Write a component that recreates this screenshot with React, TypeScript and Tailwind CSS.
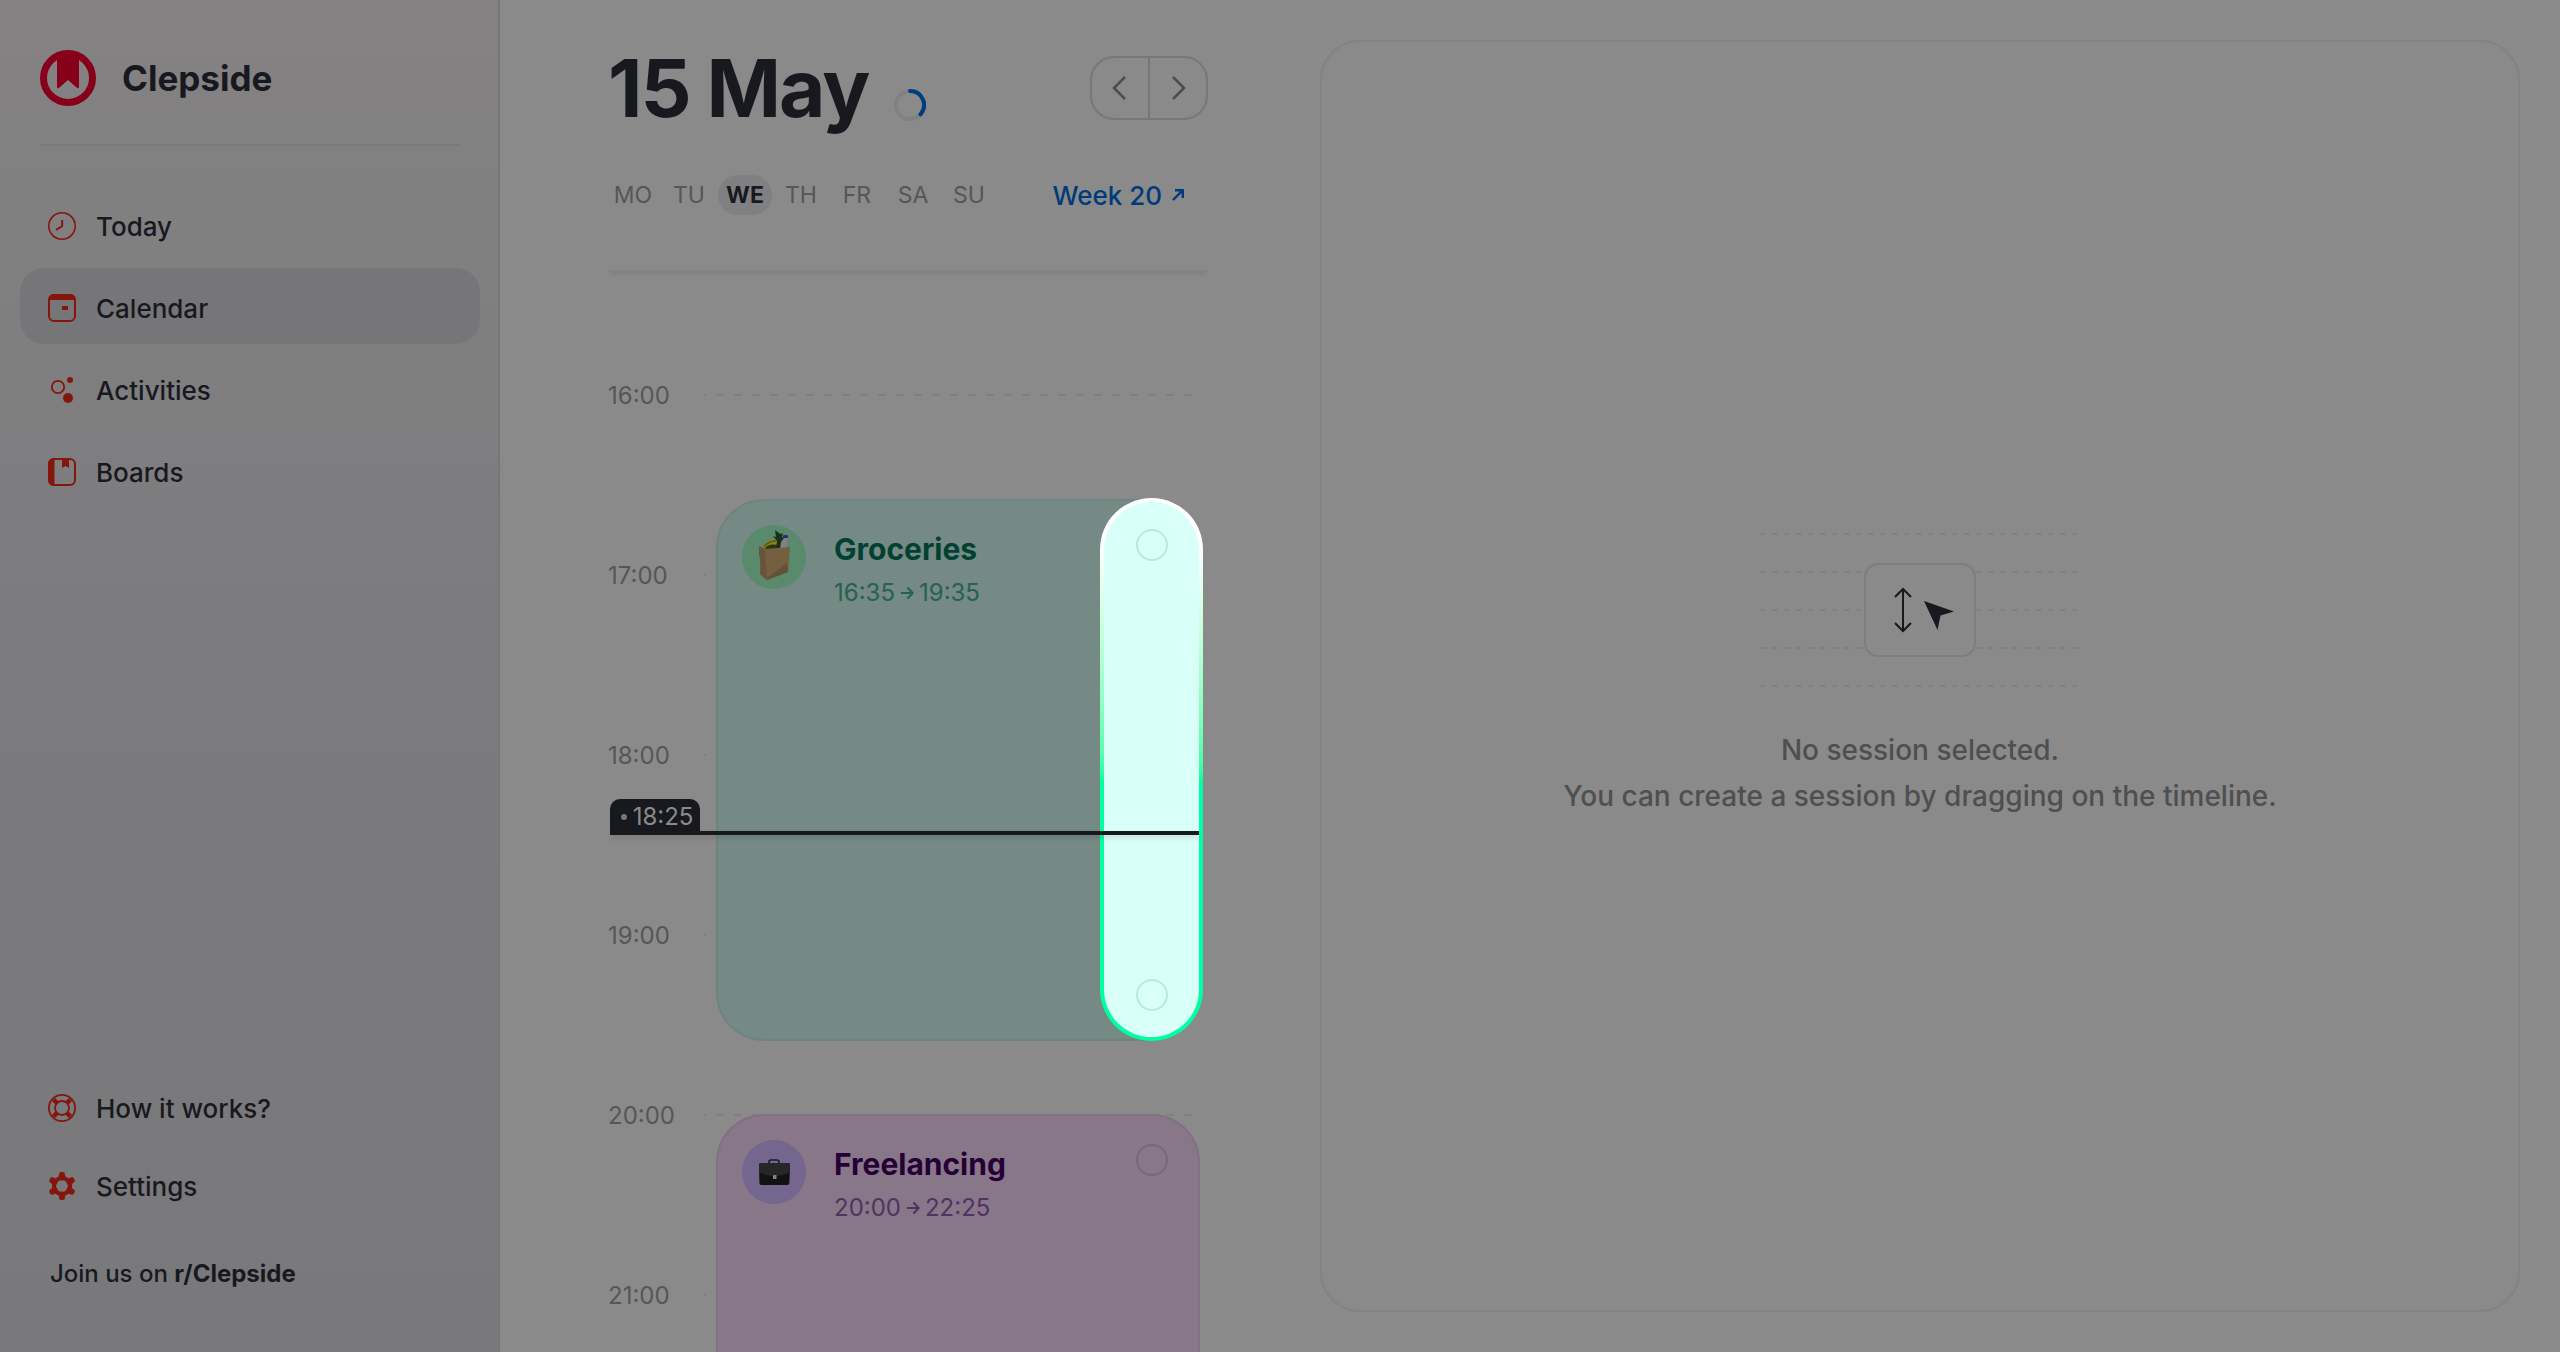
import React from 'react';

interface NavItem {
  label: string;
  icon: React.ReactNode;
  active?: boolean;
}

interface Session {
  id: string;
  title: string;
  from: string;
  to: string;
  card: string;
  avatar: string;
  titleColor: string;
  timeColor: string;
  check: string;
  icon: React.ReactNode;
}

const PX_PER_MINUTE = 3;
const FIRST_HOUR = 16;
// distance from the top of the timeline to the first hour line
const TIMELINE_OFFSET = 123;

const hours = ['16:00', '17:00', '18:00', '19:00', '20:00', '21:00'];
const weekDays = ['MO', 'TU', 'WE', 'TH', 'FR', 'SA', 'SU'];

const toMinutes = (time: string) => {
  const [h, m] = time.split(':').map(Number);
  return h * 60 + m;
};

const toTop = (time: string) => TIMELINE_OFFSET + (toMinutes(time) - FIRST_HOUR * 60) * PX_PER_MINUTE;

const Logo = () => (
  <svg viewBox="0 0 56 56" className="size-14 shrink-0" aria-hidden="true">
    <circle cx="28" cy="28" r="24.5" fill="none" stroke="#87001a" strokeWidth="7" />
    <path d="M17 5h22v31.5q0 2.5-2.2 1.2L28 30l-8.800 7.700q-2.200 1.300-2.200-1.200z" fill="#87001a" />
  </svg>
);

const iconClass = 'size-7 shrink-0 text-[#85160d]';

const ClockIcon = () => (
  <svg viewBox="0 0 28 28" className={iconClass} fill="none" stroke="currentColor" aria-hidden="true">
    <circle cx="14" cy="14" r="13.2" strokeWidth="1.6" />
    <path d="M14.200 8v5.500q0 .6-.5 1L8 17.800" strokeWidth="2" />
  </svg>
);

const CalendarIcon = () => (
  <svg viewBox="0 0 28 28" className={iconClass} aria-hidden="true">
    <rect x="1" y="1" width="26" height="26" rx="5" fill="none" stroke="currentColor" strokeWidth="2" />
    <path d="M0 6a6 6 0 0 1 6-6h16a6 6 0 0 1 6 6z" fill="currentColor" />
    <rect x="14" y="12" width="6" height="4" fill="currentColor" />
  </svg>
);

const ActivitiesIcon = () => (
  <svg viewBox="0 0 28 28" className={iconClass} fill="currentColor" aria-hidden="true">
    <circle cx="10" cy="11" r="6.200" fill="none" stroke="currentColor" strokeWidth="1.800" />
    <circle cx="22" cy="4" r="3" />
    <circle cx="20" cy="22" r="5" />
  </svg>
);

const BoardsIcon = () => (
  <svg viewBox="0 0 28 28" className={iconClass} aria-hidden="true">
    <rect x="1" y="1" width="26" height="26" rx="5" fill="none" stroke="currentColor" strokeWidth="2" />
    <path d="M6 0h.5v28H6a6 6 0 0 1-6-6V6a6 6 0 0 1 6-6zM14 1h7v9l-3.500-2-3.500 2z" fill="currentColor" />
  </svg>
);

const HelpIcon = () => (
  <svg viewBox="0 0 28 28" className={iconClass} fill="none" stroke="currentColor" aria-hidden="true">
    <circle cx="14" cy="14" r="13.100" strokeWidth="1.800" />
    <circle cx="14" cy="14" r="7" strokeWidth="1.800" />
    <path d="M5.500 5.500l3.700 3.700M22.500 5.500l-3.700 3.700M5.500 22.500l3.700-3.700M22.500 22.500l-3.700-3.700" strokeWidth="4.500" />
  </svg>
);

const GearIcon = () => (
  <svg viewBox="0 0 28 28" className={iconClass} aria-hidden="true">
    <circle cx="14" cy="14" r="8" fill="none" stroke="currentColor" strokeWidth="4.200" />
    {[0, 60, 120, 180, 240, 300].map((angle) => (
      <path
        key={angle}
        d="M8.500 7.500q2.300-1 2.600-5.500 0-2 2-2h1.800q2 0 2 2 .3 4.500 2.600 5.500l-5.500 1z"
        fill="currentColor"
        transform={`rotate(${angle} 14 14)`}
      />
    ))}
  </svg>
);

const GroceryBag = () => (
  <svg viewBox="0 0 64 64" className="size-16" aria-hidden="true">
    <path d="M20 24q3-9 15-10l2 10z" fill="#8b8318" />
    <path d="M22 22q4-6 12-6" fill="none" stroke="#5d5b12" strokeWidth="1.500" />
    <path d="M23 24q2-6 14-4v4z" fill="#2e3517" />
    <path d="M38 24l1-9q.5-3 2.500-4h3q2 1 1 4l-1.500 9z" fill="#82808a" />
    <rect x="41" y="10" width="5" height="3" rx="1" fill="#2f2878" />
    <path d="M34 24l1-8-4-5 3 1-1-7 4 3 2 1 2-1-1 4 2 1-3 4-1 7z" fill="#15331a" />
    <path d="M17 21l6 3 25-2-2 25-21 8-7-6q2-12-1-20z" fill="#745f41" />
    <path d="M17 21l6 3 2 31-7-6q1-13-1-20z" fill="#67543a" />
    <path d="M25 53l20-15 1 9-21 8z" fill="#655137" />
  </svg>
);

const Briefcase = () => (
  <svg viewBox="0 0 64 64" className="size-16" aria-hidden="true">
    <path d="M27 24v-2q0-2 2-2h6q2 0 2 2v2" fill="none" stroke="#1b1b1b" strokeWidth="1.600" />
    <path d="M17 25q0-2 2-2h27q2 0 2 2l-.6 18q0 2-2 2h-26q-2 0-2-2z" fill="#121212" />
    <path d="M17 25q0-2 2-2h27q2 0 2 2v7q-7 4-15.500 4T17 32z" fill="#272727" />
    <rect x="31" y="35" width="3.500" height="4" rx=".5" fill="#858585" />
  </svg>
);

const navItems: NavItem[] = [
  { label: 'Today', icon: <ClockIcon /> },
  { label: 'Calendar', icon: <CalendarIcon />, active: true },
  { label: 'Activities', icon: <ActivitiesIcon /> },
  { label: 'Boards', icon: <BoardsIcon /> },
];

const footerItems: NavItem[] = [
  { label: 'How it works?', icon: <HelpIcon /> },
  { label: 'Settings', icon: <GearIcon /> },
];

const sessions: Session[] = [
  {
    id: 'groceries',
    title: 'Groceries',
    from: '16:35',
    to: '19:35',
    card: 'bg-[#758985] border-[#6d847f]',
    avatar: 'bg-[#5a8a6c]',
    titleColor: 'text-[#004131]',
    timeColor: 'text-[#27614f]',
    check: 'border-[#b8ebdf]',
    icon: <GroceryBag />,
  },
  {
    id: 'freelancing',
    title: 'Freelancing',
    from: '20:00',
    to: '22:25',
    card: 'bg-[#877789] border-[#827085]',
    avatar: 'bg-[#75668f]',
    titleColor: 'text-[#260035]',
    timeColor: 'text-[#52325f]',
    check: 'border-[#786780]',
    icon: <Briefcase />,
  },
];

const Sidebar = () => (
  <aside className="flex w-[500px] shrink-0 flex-col border-r-2 border-[#777779] bg-linear-to-b from-[#848283] via-[#7b7b7d] to-[#79797b] pl-5 pr-[18px]">
    <div className="mx-5 flex h-[146px] shrink-0 items-center border-b-2 border-[#7b797d] pb-8 pt-[44px]">
      <Logo />
      <span className="ml-[26px] text-[35px] font-bold leading-none">Clepside</span>
    </div>
    <nav className="mt-10 flex flex-col gap-1.5">
      {navItems.map((item) => (
        <a
          key={item.label}
          href="#"
          className={`flex h-19 items-center gap-5 rounded-3xl pl-7 pt-1 text-[26px] font-[450] ${item.active ? 'bg-[#767678]' : ''}`}
        >
          {item.icon}
          {item.label}
        </a>
      ))}
    </nav>
    <nav className="mt-auto flex flex-col gap-0.5">
      {footerItems.map((item) => (
        <a key={item.label} href="#" className="flex h-19 items-center gap-5 pl-7 text-[26px] font-[450]">
          {item.icon}
          {item.label}
        </a>
      ))}
    </nav>
    <p className="mb-[62px] mt-[34px] pl-[30px] text-2xl font-medium leading-8">
      Join us on <a href="#" className="font-bold">r/Clepside</a>
    </p>
  </aside>
);

const DayHeader = () => (
  <header className="relative z-10 flex h-[272px] shrink-0 flex-col border-b-2 border-[#828282] shadow-[0_4px_4px_-2px_#00000010]">
    <div className="mt-12 flex h-20 items-center">
      <h1 className="text-[80px] font-bold leading-none tracking-tight">15 May</h1>
      <svg viewBox="0 0 32 32" className="ml-[26px] mt-[34px] size-8" fill="none" strokeWidth="4" role="img" aria-label="Day progress">
        <circle cx="16" cy="16" r="14" stroke="#818181" />
        <path d="M16 2a14 14 0 0 1 10.500 23.300" stroke="#003d80" strokeLinecap="round" />
      </svg>
      <div className="ml-auto flex h-16 w-[118px] divide-x-2 divide-[#777779] rounded-3xl border-2 border-[#777779] text-[#4c4c4c]">
        <button type="button" aria-label="Previous day" className="flex flex-1 items-center justify-center pr-0.5">
          <svg viewBox="0 0 14 28" className="h-7 w-3.5" fill="none" stroke="currentColor" strokeWidth="2.500">
            <path d="M13 3L2 14l11 11" />
          </svg>
        </button>
        <button type="button" aria-label="Next day" className="flex flex-1 items-center justify-center pl-0.5">
          <svg viewBox="0 0 14 28" className="h-7 w-3.5" fill="none" stroke="currentColor" strokeWidth="2.500">
            <path d="M1 3l11 11L1 25" />
          </svg>
        </button>
      </div>
    </div>
    <div className="mt-[47px] flex h-10 items-center">
      <div className="-ml-[3px] flex">
        {weekDays.map((day) => (
          <button
            key={day}
            type="button"
            className={`mx-px h-10 w-[54px] rounded-[20px] text-[23px] ${day === 'WE' ? 'bg-[#808082] font-bold' : 'text-[#565656]'}`}
          >
            {day}
          </button>
        ))}
      </div>
      <a href="#" className="ml-auto mr-6 flex items-center gap-2.5 text-[26px] font-[450] text-[#003a7a]">
        Week 20
        <svg viewBox="0 0 12 12" className="size-3" fill="none" stroke="currentColor" strokeWidth="2.400" aria-hidden="true">
          <path d="M3 1.200h7.800V9M10.800 1.200L1 11" />
        </svg>
      </a>
    </div>
  </header>
);

const SessionCard = ({ session }: { session: Session }) => {
  const height = (toMinutes(session.to) - toMinutes(session.from)) * PX_PER_MINUTE + 2;
  return (
    <article
      className={`absolute left-[108px] right-2 flex items-start rounded-[48px] border-2 p-6 ${session.card}`}
      style={{ top: toTop(session.from) - 1, height }}
    >
      <div className={`size-16 shrink-0 rounded-full ${session.avatar}`}>{session.icon}</div>
      <div className="ml-7 pt-1">
        <h2 className={`text-[30px] font-bold leading-10 ${session.titleColor}`}>{session.title}</h2>
        <p className={`mt-1 flex items-center gap-1 text-2xl leading-10 ${session.timeColor}`}>
          {session.from}
          <svg viewBox="0 0 16 16" className="size-4" fill="none" stroke="currentColor" strokeWidth="2" aria-label="to">
            <path d="M2 8h11M8.500 2.500l5.200 5.500-5.200 5.500" />
          </svg>
          {session.to}
        </p>
      </div>
      <input
        type="checkbox"
        aria-label={`${session.title} done`}
        className={`ml-auto mr-1.5 mt-1 size-8 shrink-0 appearance-none rounded-full border-2 ${session.check}`}
      />
    </article>
  );
};

const Timeline = () => (
  <div className="relative min-h-0 flex-1 overflow-hidden">
    <div className="pt-[33px]">
      {hours.map((hour) => (
        <div key={hour} className="flex h-[180px] items-center">
          <span className="w-24 pt-0.5 text-2xl text-[#565656]">{hour}</span>
          <div className="mr-4 h-0.5 flex-1 bg-[repeating-linear-gradient(90deg,#808080_0_2px,transparent_2px_12px,#808080_12px_18px)]" />
        </div>
      ))}
    </div>

    {sessions.map((session) => (
      <SessionCard key={session.id} session={session} />
    ))}

    {/* spotlight over the check column */}
    <div
      className="absolute right-[5px] w-[103px] rounded-[52px] bg-linear-to-b from-white from-8% to-[#00ffa2] to-52% p-1"
      style={{ top: toTop('16:35') - 2, height: 543 }}
    >
      <div className="flex h-full flex-col items-center justify-between rounded-[48px] bg-[#d8fff8] pb-[26px] pt-[27px]">
        <input type="checkbox" aria-label="Start done" className="size-8 appearance-none rounded-full border-2 border-[#b5eadf]" />
        <input type="checkbox" aria-label="End done" className="size-8 appearance-none rounded-full border-2 border-[#b5eadf]" />
      </div>
    </div>

    {/* current time */}
    <div className="absolute left-0.5 right-[9px]" style={{ top: toTop('18:25') - 31 }}>
      <div className="flex h-8 w-[90px] items-center justify-center gap-1.5 rounded-t-[10px] bg-[#17191f] pl-1 pt-1 text-2xl text-[#8a8a8a]">
        <span className="size-1.5 rounded-full bg-[#77787a]" />
        18:25
      </div>
      <div className="h-1 bg-[#17191f] shadow-[0_3px_5px_#00000022]" />
    </div>
  </div>
);

const EmptyPanel = () => (
  <section className="my-10 mr-10 flex flex-1 flex-col items-center rounded-[40px] border-2 border-[#838383] pt-[491px]">
    <div className="relative flex h-[154px] w-80 flex-col justify-between">
      {[0, 1, 2, 3, 4].map((line) => (
        <div key={line} className="h-0.5 bg-[repeating-linear-gradient(90deg,#818181_0_6px,transparent_6px_12px)]" />
      ))}
      <div className="absolute left-[104px] top-[30px] h-[94px] w-28 rounded-[14px] border-2 border-[#7e7e7e] bg-[#8a8a8a]">
        <svg viewBox="0 0 108 90" className="size-full" aria-hidden="true">
          <path d="M37 24v42M29 32l8-8 8 8M29 58l8 8 8-8" fill="none" stroke="#17191f" strokeWidth="2" />
          <path d="M58 36l30 10.500-13.500 4L71.500 65z" fill="#17191f" />
        </svg>
      </div>
    </div>
    <p className="mt-10 text-center text-[28px] font-[450] leading-[46px] text-[#4f4f4f]">
      No session selected.
      <br />
      You can create a session by dragging on the timeline.
    </p>
  </section>
);

const App: React.FC = () => {
  return (
    <div className="flex h-screen overflow-hidden bg-[#8a8a8a] font-['Inter',sans-serif] text-[#17191f]">
      <Sidebar />
      <main className="flex min-w-0 flex-1">
        <div className="ml-[108px] mr-28 flex w-[600px] shrink-0 flex-col">
          <DayHeader />
          <Timeline />
        </div>
        <EmptyPanel />
      </main>
    </div>
  );
};

export default App;
